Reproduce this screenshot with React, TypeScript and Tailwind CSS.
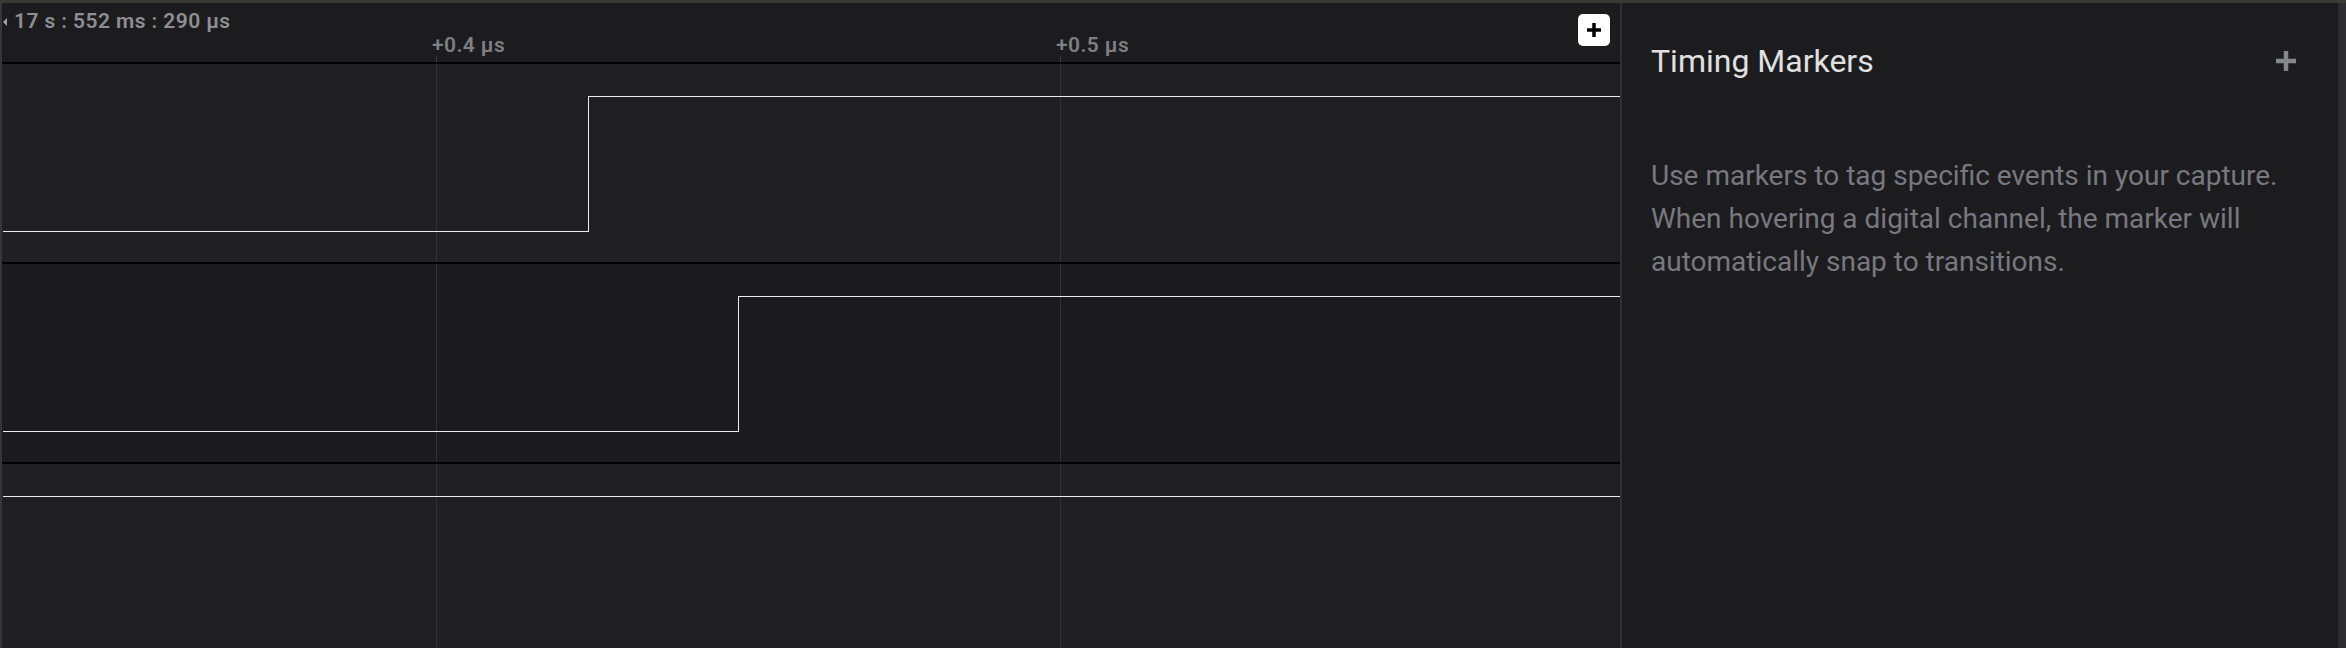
import React from 'react';

const GRID = [434, 1058];

type Channel = {
  bg: string;
  height: number;
  // points of the step trace, local to the row
  points: [number, number][];
};

const channels: Channel[] = [
  { bg: 'bg-[#202022]', height: 198, points: [[0, 167], [586, 167], [586, 32], [1618, 32]] },
  { bg: 'bg-[#1b1b1d]', height: 198, points: [[0, 167], [736, 167], [736, 32], [1618, 32]] },
  { bg: 'bg-[#202022]', height: 184, points: [[0, 32], [1618, 32]] },
];

const Trace: React.FC<{ channel: Channel }> = ({ channel }) => {
  const d = channel.points.map(([x, y], i) => `${i === 0 ? 'M' : 'L'}${x + 0.5} ${y + 0.5}`).join(' ');
  return (
    <svg width="1618" height={channel.height} className="block" shapeRendering="crispEdges">
      {GRID.map((x) => (
        <line key={x} x1={x + 0.5} y1={0} x2={x + 0.5} y2={channel.height} stroke="#323236" strokeWidth="1" />
      ))}
      <path d={d} fill="none" stroke="#ececec" strokeWidth="1" />
    </svg>
  );
};

const Ruler: React.FC = () => {
  return (
    <div className="relative h-[59px] bg-[#1c1c1e]">
      {/* start time */}
      <div className="flex items-center h-[38px] pl-[1px]">
        <svg width="6" height="8" viewBox="0 0 6 8" className="mr-[5px] shrink-0">
          <path d="M0 4 L4 0 L4 8 Z" fill="#a0a0a6" />
        </svg>
        <span className="text-[21px] font-semibold text-[#8e8e94] tracking-[0.02em]">17 s : 552 ms : 290 µs</span>
      </div>

      {/* tick labels */}
      {[
        { x: GRID[0], label: '+0.4 µs' },
        { x: GRID[1], label: '+0.5 µs' },
      ].map((t) => (
        <React.Fragment key={t.label}>
          <span className="absolute top-[30px] text-[21px] leading-[24px] font-semibold text-[#7e7e85] tracking-[0.02em]" style={{ left: t.x - 4 }}>
            {t.label}
          </span>
          <div className="absolute top-[53px] h-[6px] w-px bg-[#3a3a3e]" style={{ left: t.x }} />
        </React.Fragment>
      ))}

      <button className="absolute top-[11px] right-[10px] w-[32px] h-[32px] rounded-[5px] bg-white flex items-center justify-center">
        <svg width="16" height="16" viewBox="0 0 16 16">
          <path d="M8 1 V15 M1 8 H15" stroke="#000" strokeWidth="3.5" />
        </svg>
      </button>
    </div>
  );
};

const Timeline: React.FC = () => {
  return (
    <div className="w-[1620px] h-full flex flex-col border-l-2 border-[#35353a] overflow-hidden">
      <Ruler />
      {channels.map((c, i) => (
        <React.Fragment key={i}>
          <div className="h-[2px] bg-black shrink-0" />
          <div className={`${c.bg} shrink-0`}>
            <Trace channel={c} />
          </div>
        </React.Fragment>
      ))}
    </div>
  );
};

const MarkersPanel: React.FC = () => {
  return (
    <div className="flex-1 bg-[#1c1c1e] pl-[29px] pr-[42px] pt-[38px]">
      <div className="flex items-center justify-between">
        <h2 className="text-[32px] leading-[40px] font-normal text-[#e0e0e2]">Timing Markers</h2>
        <svg width="20" height="20" viewBox="0 0 20 20">
          <path d="M10 0 V20 M0 10 H20" stroke="#86868e" strokeWidth="4.5" />
        </svg>
      </div>
      <p className="mt-[73px] text-[28px] leading-[43px] text-[#787880]">
        Use markers to tag specific events in your capture. When hovering a digital channel, the marker will automatically snap to transitions.
      </p>
    </div>
  );
};

export default function App() {
  return (
    <div className="w-[2346px] h-[648px] flex flex-col bg-[#1c1c1e] overflow-hidden font-['Roboto',sans-serif]">
      <div className="h-[3px] bg-[#3b3836] shrink-0" />
      <div className="flex-1 flex min-h-0">
        <Timeline />
        <div className="w-[2px] bg-[#2f2f34]" />
        <MarkersPanel />
        <div className="w-[8px] bg-[#2c2c31]" />
      </div>
    </div>
  );
}
